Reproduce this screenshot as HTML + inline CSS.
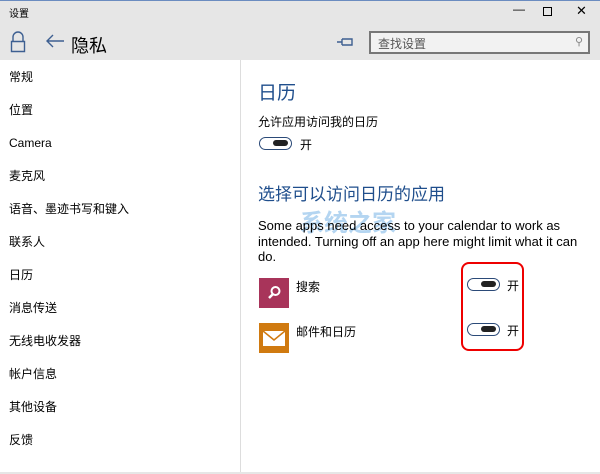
<!DOCTYPE html><html><head><meta charset="utf-8"><style>
*{margin:0;padding:0;box-sizing:border-box}
body{width:600px;height:474px;overflow:hidden;background:#fff;font-family:"Liberation Sans","Noto Sans CJK SC",sans-serif;position:relative;color:#000}
.a{position:absolute;white-space:nowrap}
.nav{font-size:12px;left:9px;line-height:16px}
.tg{position:absolute;width:33px;height:13px;border:1.5px solid #2b4a78;border-radius:7px}
.tg:after{content:"";position:absolute;right:3px;top:2px;width:15px;height:6px;background:#222;border-radius:3px}
</style></head><body>
<div class="a" style="left:0;top:0;width:600px;height:60px;background:#e6e6e6;border-top:1px solid #6b8cc0"></div>
<div class="a" style="left:9px;top:5px;font-size:10px">设置</div>
<div class="a" style="left:513px;top:2px;font-size:12px">—</div>
<div class="a" style="left:543px;top:7px;width:9px;height:9px;border:1.3px solid #000"></div>
<div class="a" style="left:576px;top:3px;font-size:13px">✕</div>
<svg class="a" style="left:10px;top:31px" width="16" height="22"><path d="M3 10V6a5 5 0 0 1 10 0v4M1.5 10.5h13v10h-13z" fill="none" stroke="#3d5f91" stroke-width="1.4"/></svg>
<svg class="a" style="left:45px;top:34px" width="20" height="14"><path d="M19 7H2M8 1L2 7l6 6" fill="none" stroke="#3d5f91" stroke-width="1.4"/></svg>
<div class="a" style="left:71px;top:32px;font-size:18px">隐私</div>
<svg class="a" style="left:336px;top:37px" width="18" height="10"><path d="M1 5h5M6 2v6M6 2h10v6H6M16 2v6" fill="none" stroke="#3d5f91" stroke-width="1.4"/></svg>
<div class="a" style="left:369px;top:31px;width:221px;height:23px;border:2px solid #777;background:#f2f2f2"></div>
<div class="a" style="left:378px;top:35px;font-size:12px;color:#555">查找设置</div>
<div class="a" style="left:575px;top:35px;font-size:11px;color:#888">⚲</div>
<div class="a" style="left:240px;top:60px;width:1px;height:412px;background:#ddd"></div>
<div class="a" style="left:0;top:472px;width:600px;height:2px;background:#e6e6e6"></div>
<div class="a nav" style="top:69px">常规</div>
<div class="a nav" style="top:102px">位置</div>
<div class="a nav" style="top:135px">Camera</div>
<div class="a nav" style="top:168px">麦克风</div>
<div class="a nav" style="top:201px">语音、墨迹书写和键入</div>
<div class="a nav" style="top:234px">联系人</div>
<div class="a nav" style="top:267px">日历</div>
<div class="a nav" style="top:300px">消息传送</div>
<div class="a nav" style="top:333px">无线电收发器</div>
<div class="a nav" style="top:366px">帐户信息</div>
<div class="a nav" style="top:399px">其他设备</div>
<div class="a nav" style="top:432px">反馈</div>
<div class="a" style="left:258px;top:78px;font-size:19px;color:#1f4e8c">日历</div>
<div class="a" style="left:258px;top:113px;font-size:12px">允许应用访问我的日历</div>
<div class="tg" style="left:259px;top:137px"></div>
<div class="a" style="left:300px;top:136px;font-size:12px">开</div>
<div class="a" style="left:258px;top:180px;font-size:17px;color:#1f4e8c">选择可以访问日历的应用</div>
<div class="a" style="left:300px;top:203px;font-size:24px;font-weight:bold;color:#2a8ad8;opacity:.35">系统之家</div>
<div class="a" style="left:258px;top:218px;font-size:13px;line-height:15.5px;white-space:normal;width:320px">Some apps need access to your calendar to work as intended. Turning off an app here might limit what it can do.</div>
<div class="a" style="left:259px;top:278px;width:30px;height:30px;background:#a8345a"></div>
<svg class="a" style="left:264px;top:283px" width="20" height="20"><circle cx="11.5" cy="8" r="4" fill="none" stroke="#fff" stroke-width="2"/><path d="M9 11l-4 4" stroke="#fff" stroke-width="2.5"/></svg>
<div class="a" style="left:296px;top:278px;font-size:12px">搜索</div>
<div class="a" style="left:259px;top:323px;width:30px;height:30px;background:#d07a10"></div>
<svg class="a" style="left:262px;top:330px" width="24" height="17"><rect x="1" y="1" width="22" height="15" fill="#fff"/><path d="M1 1l11 9 11-9" fill="none" stroke="#d07a10" stroke-width="1.5"/></svg>
<div class="a" style="left:296px;top:323px;font-size:12px">邮件和日历</div>
<div class="tg" style="left:467px;top:278px"></div>
<div class="a" style="left:507px;top:277px;font-size:12px">开</div>
<div class="tg" style="left:467px;top:323px"></div>
<div class="a" style="left:507px;top:322px;font-size:12px">开</div>
<div class="a" style="left:461px;top:262px;width:63px;height:89px;border:2px solid #e00;border-radius:8px"></div>
</body></html>
